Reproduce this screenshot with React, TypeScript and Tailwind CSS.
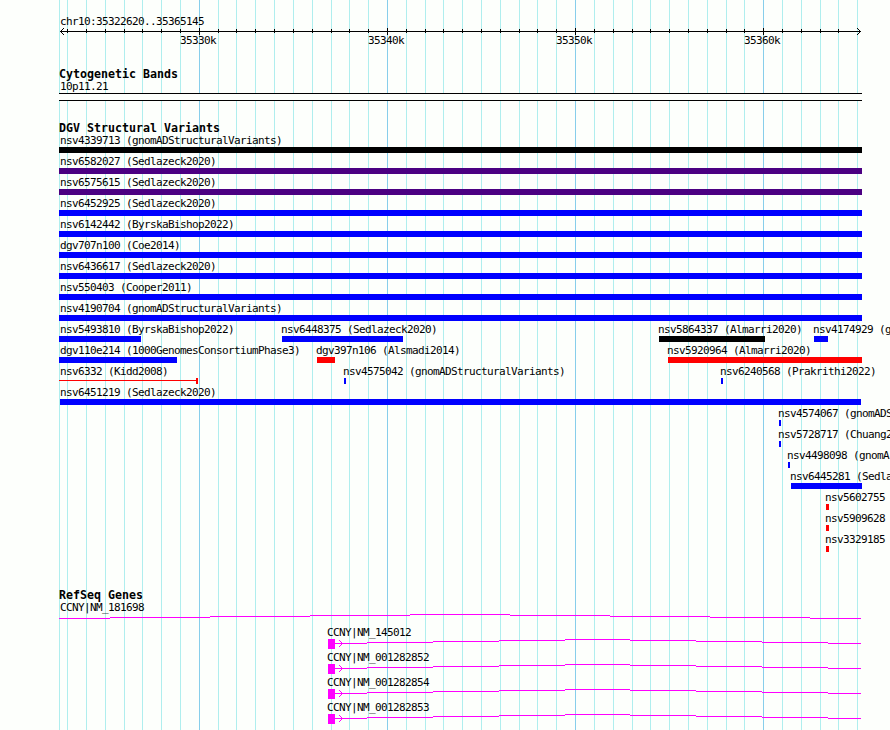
type Feature = {
  name: string;
  start: number;
  end: number;
  color?: string;
  shape?: 'bar' | 'range';
};

const LEFT = 59;
const RIGHT = 862;

const MINOR = [
  59, 67, 86, 105, 124, 142, 161, 180, 218, 236, 255, 274, 293, 312, 331, 349, 368, 406, 425, 443, 462,
  481, 500, 519, 537, 556, 594, 613, 632, 650, 669, 688, 707, 726, 744, 782, 801, 820, 838, 857,
];
const MAJOR = [199, 387, 575, 763];
const TICK_LABELS = ['35330k', '35340k', '35350k', '35360k'];

const BLUE = 'bg-[#0000ff]';
const RED = 'bg-[#ff0000]';
const BLACK = 'bg-black';
const INDIGO = 'bg-[#4b0082]';

const VARIANT_ROWS: Feature[][] = [
  [{ name: 'nsv4339713 (gnomADStructuralVariants)', start: LEFT, end: RIGHT, color: BLACK }],
  [{ name: 'nsv6582027 (Sedlazeck2020)', start: LEFT, end: RIGHT, color: INDIGO }],
  [{ name: 'nsv6575615 (Sedlazeck2020)', start: LEFT, end: RIGHT, color: INDIGO }],
  [{ name: 'nsv6452925 (Sedlazeck2020)', start: LEFT, end: RIGHT }],
  [{ name: 'nsv6142442 (ByrskaBishop2022)', start: LEFT, end: RIGHT }],
  [{ name: 'dgv707n100 (Coe2014)', start: LEFT, end: RIGHT }],
  [{ name: 'nsv6436617 (Sedlazeck2020)', start: LEFT, end: RIGHT }],
  [{ name: 'nsv550403 (Cooper2011)', start: LEFT, end: RIGHT }],
  [{ name: 'nsv4190704 (gnomADStructuralVariants)', start: LEFT, end: RIGHT }],
  [
    { name: 'nsv5493810 (ByrskaBishop2022)', start: LEFT, end: 141 },
    { name: 'nsv6448375 (Sedlazeck2020)', start: 282, end: 403 },
    { name: 'nsv5864337 (Almarri2020)', start: 659, end: 765, color: BLACK },
    { name: 'nsv4174929 (g', start: 814, end: 828 },
  ],
  [
    { name: 'dgv110e214 (1000GenomesConsortiumPhase3)', start: LEFT, end: 177 },
    { name: 'dgv397n106 (Alsmadi2014)', start: 317, end: 335, color: RED },
    { name: 'nsv5920964 (Almarri2020)', start: 668, end: RIGHT, color: RED },
  ],
  [
    { name: 'nsv6332 (Kidd2008)', start: LEFT, end: 198, color: RED, shape: 'range' },
    { name: 'nsv4575042 (gnomADStructuralVariants)', start: 344, end: 346 },
    { name: 'nsv6240568 (Prakrithi2022)', start: 721, end: 723 },
  ],
  [{ name: 'nsv6451219 (Sedlazeck2020)', start: 60, end: 861 }],
  [{ name: 'nsv4574067 (gnomADS', start: 779, end: 781 }],
  [{ name: 'nsv5728717 (Chuang2', start: 779, end: 781 }],
  [{ name: 'nsv4498098 (gnomA', start: 788, end: 790 }],
  [{ name: 'nsv6445281 (Sedla', start: 791, end: RIGHT }],
  [{ name: 'nsv5602755', start: 826, end: 829, color: RED }],
  [{ name: 'nsv5909628', start: 826, end: 829, color: RED }],
  [{ name: 'nsv3329185', start: 826, end: 829, color: RED }],
];

const GENES = ['CCNY|NM_145012', 'CCNY|NM_001282852', 'CCNY|NM_001282854', 'CCNY|NM_001282853'];

// x positions where the intron line steps by one pixel
const LONG_INTRON = [59, 110, 210, 310, 410, 510, 610, 710, 810, 861];
const SHORT_INTRON = [335, 367, 433, 499, 565, 630, 696, 762, 828, 861];

function Grid() {
  return (
    <svg className="absolute inset-0" width="890" height="730" shapeRendering="crispEdges">
      {MINOR.map((x) => (
        <rect key={x} x={x} y="0" width="1" height="730" fill="#afeeee" />
      ))}
      {MAJOR.map((x) => (
        <rect key={x} x={x} y="0" width="1" height="730" fill="#87ceeb" />
      ))}
    </svg>
  );
}

function Ruler() {
  return (
    <div className="pt-[15px]">
      <div className="pl-[60px]">chr10:35322620..35365145</div>
      <svg className="block overflow-visible" width="890" height="6" shapeRendering="crispEdges">
        <rect x="60" y="3" width="801" height="1" />
        {MINOR.slice(1, -1).map((x) => (
          <rect key={x} x={x} y="1" width="1" height="4" />
        ))}
        {MAJOR.map((x) => (
          <rect key={x} x={x} y="0" width="1" height="7" />
        ))}
        <path d="M60 3h1v1h-1zM61 2h1v1h-1zM62 1h1v1h-1zM63 0h1v1h-1zM61 4h1v1h-1zM62 5h1v1h-1zM63 6h1v1h-1z" />
        <path d="M860 3h1v1h-1zM859 2h1v1h-1zM858 1h1v1h-1zM857 0h1v1h-1zM859 4h1v1h-1zM858 5h1v1h-1zM857 6h1v1h-1z" />
      </svg>
      <div className="flex gap-[152px] pl-[180px]">
        {TICK_LABELS.map((label) => (
          <span key={label} className="w-9 shrink-0">
            {label}
          </span>
        ))}
      </div>
    </div>
  );
}

function TrackTitle({ children }: { children: string }) {
  return (
    <h2 className="h-[13px] pl-[59px] text-[11.63px] leading-[15px] font-bold tracking-normal">{children}</h2>
  );
}

function Variant({ name, start, end, color = BLUE, shape = 'bar' }: Feature) {
  return (
    <div className="absolute top-0" style={{ left: start }}>
      <div className={start <= 60 ? (start === 60 ? '' : 'pl-px') : '-ml-px'}>{name}</div>
      {shape === 'bar' ? (
        <div className={`h-1.5 ${color}`} style={{ width: end - start }} />
      ) : (
        <div className="flex h-1.5" style={{ width: end - start }}>
          <div className={`mt-0.5 h-px flex-1 ${color}`} />
          <div className={`w-0.5 ${color}`} />
        </div>
      )}
    </div>
  );
}

function Intron({ steps, y }: { steps: number[]; y: number }) {
  return (
    <>
      {steps.slice(0, -1).map((x, i) => (
        <rect key={x} x={x} y={y - 4 + Math.abs(4 - i)} width={steps[i + 1] - x} height="1" />
      ))}
    </>
  );
}

function Gene({ name }: { name: string }) {
  return (
    <div className="h-[25px]">
      <div className="pl-[327px]">{name}</div>
      <svg className="block" width="890" height="12" fill="#ff00ff" shapeRendering="crispEdges">
        <rect x="328" y="0" width="7" height="10" />
        <Intron steps={SHORT_INTRON} y={4} />
        <path d="M339 1h1v1h-1zM340 2h1v1h-1zM341 3h1v1h-1zM342 4h1v1h-1zM341 5h1v1h-1zM340 6h1v1h-1zM339 7h1v1h-1z" />
      </svg>
    </div>
  );
}

export default function App() {
  return (
    <div className="relative h-[730px] w-[890px] overflow-hidden bg-[#fdfffc] font-['DejaVu_Sans_Mono',monospace] text-[11px] leading-[13px] tracking-[-0.622px] whitespace-nowrap text-black">
      <Grid />
      <div className="relative flex flex-col">
        <Ruler />

        <section className="pt-5">
          <TrackTitle>Cytogenetic Bands</TrackTitle>
          <div className="pl-[60px]">10p11.21</div>
          <div className="ml-[59px] h-2 w-[803px] border-y border-black bg-[#fdfffc]" />
        </section>

        <section className="pt-5">
          <TrackTitle>DGV Structural Variants</TrackTitle>
          {VARIANT_ROWS.map((row) => (
            <div key={row[0].name} className="relative h-[21px]">
              {row.map((feature) => (
                <Variant key={feature.name} {...feature} />
              ))}
            </div>
          ))}
        </section>

        <section className="pt-[34px]">
          <TrackTitle>RefSeq Genes</TrackTitle>
          <div className="pl-[60px]">CCNY|NM_181698</div>
          <svg className="block" width="890" height="12" fill="#ff00ff" shapeRendering="crispEdges">
            <Intron steps={LONG_INTRON} y={4} />
          </svg>
          {GENES.map((name) => (
            <Gene key={name} name={name} />
          ))}
        </section>
      </div>
    </div>
  );
}
